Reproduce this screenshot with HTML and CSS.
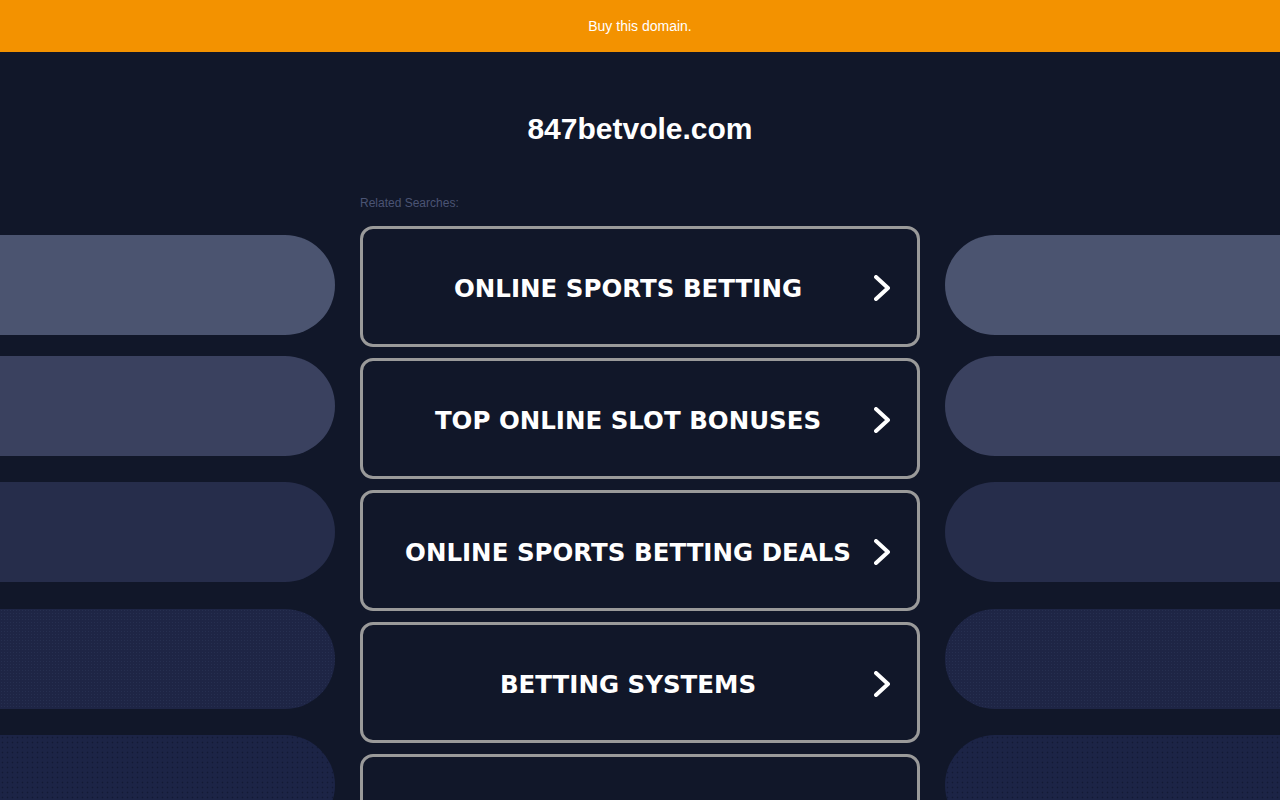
FILE: index.html
```html
<!DOCTYPE html>
<html lang="en">
<head>
<meta charset="utf-8">
<title>847betvole.com</title>
<link rel="stylesheet" href="styles.css">
</head>
<body>
<div class="banner">Buy this domain.</div>
<div class="main">
  <div class="side side-left">
    <div class="pill p1"></div>
    <div class="pill p2"></div>
    <div class="pill p3"></div>
    <div class="pill p4"></div>
    <div class="pill p5"></div>
  </div>
  <div class="center">
    <h1 class="title">847betvole.com</h1>
    <div class="related">Related Searches:</div>
    <div class="links">
      <a class="link" href="#"><span class="link-text">ONLINE SPORTS BETTING</span><svg class="chev" width="16" height="26" viewBox="0 0 16 26"><polyline points="2,2 14,13 2,24" fill="none" stroke="#fff" stroke-width="4" stroke-linecap="round" stroke-linejoin="round"/></svg></a>
      <a class="link" href="#"><span class="link-text">TOP ONLINE SLOT BONUSES</span><svg class="chev" width="16" height="26" viewBox="0 0 16 26"><polyline points="2,2 14,13 2,24" fill="none" stroke="#fff" stroke-width="4" stroke-linecap="round" stroke-linejoin="round"/></svg></a>
      <a class="link" href="#"><span class="link-text">ONLINE SPORTS BETTING DEALS</span><svg class="chev" width="16" height="26" viewBox="0 0 16 26"><polyline points="2,2 14,13 2,24" fill="none" stroke="#fff" stroke-width="4" stroke-linecap="round" stroke-linejoin="round"/></svg></a>
      <a class="link" href="#"><span class="link-text">BETTING SYSTEMS</span><svg class="chev" width="16" height="26" viewBox="0 0 16 26"><polyline points="2,2 14,13 2,24" fill="none" stroke="#fff" stroke-width="4" stroke-linecap="round" stroke-linejoin="round"/></svg></a>
      <a class="link" href="#"><span class="link-text"></span><svg class="chev" width="16" height="26" viewBox="0 0 16 26"><polyline points="2,2 14,13 2,24" fill="none" stroke="#fff" stroke-width="4" stroke-linecap="round" stroke-linejoin="round"/></svg></a>
    </div>
  </div>
  <div class="side side-right">
    <div class="pill p1"></div>
    <div class="pill p2"></div>
    <div class="pill p3"></div>
    <div class="pill p4"></div>
    <div class="pill p5"></div>
  </div>
</div>
</body>
</html>
```
FILE: styles.css
```css
html, body {
  margin: 0;
  padding: 0;
  overflow: hidden;
}
body {
  background: #111729;
  font-family: "Liberation Sans", Arial, sans-serif;
  color: #fff;
}
.banner {
  height: 52px;
  background: #f39200;
  display: flex;
  align-items: center;
  justify-content: center;
  font-size: 14px;
  color: #fff;
}
.main {
  display: grid;
  grid-template-columns: 1fr 560px 1fr;
  column-gap: 25px;
}
.side {
  display: flex;
  flex-direction: column;
  gap: 26px;
  padding-top: 183px;
}
.pill {
  height: 100px;
  flex-shrink: 0;
}
.pill.p1 { margin-bottom: -5px; background-color: #4b5470; }
.pill.p2 { background-color: #3a415f; }
.pill.p3 { background-color: #262d4b; }
.pill.p4 {
  margin-top: 1px;
  background-color: #1e2545;
  background-image: radial-gradient(rgba(90, 105, 150, 0.14) 0.7px, transparent 1px);
  background-size: 3px 3px;
}
.pill.p5 {
  background-color: #1c2446;
  background-image: radial-gradient(rgba(10, 15, 35, 0.45) 0.8px, transparent 1.1px);
  background-size: 5px 5px;
}
.side-left .pill { border-radius: 0 50px 50px 0; }
.side-right .pill { border-radius: 50px 0 0 50px; }
.center {
  display: flex;
  flex-direction: column;
}
.title {
  margin: 59px 0 0;
  font-size: 30px;
  line-height: 36px;
  font-weight: bold;
  text-align: center;
  color: #fff;
}
.related {
  margin-top: 49px;
  font-size: 12px;
  line-height: 14px;
  color: #4b5474;
}
.links {
  margin-top: 16px;
  display: flex;
  flex-direction: column;
  gap: 11px;
}
.link {
  height: 121px;
  box-sizing: border-box;
  border: 3px solid #9a9a9a;
  border-radius: 13px;
  display: flex;
  align-items: center;
  padding: 0 27px 0 29px;
  gap: 10px;
  text-decoration: none;
  color: #fff;
}
.link-text {
  flex: 1;
  text-align: center;
  font-family: "DejaVu Sans", Verdana, sans-serif;
  font-weight: bold;
  font-size: 24.5px;
  white-space: nowrap;
  padding-top: 4px;
}
.chev {
  flex-shrink: 0;
  display: block;
  margin-top: 3px;
}
```
